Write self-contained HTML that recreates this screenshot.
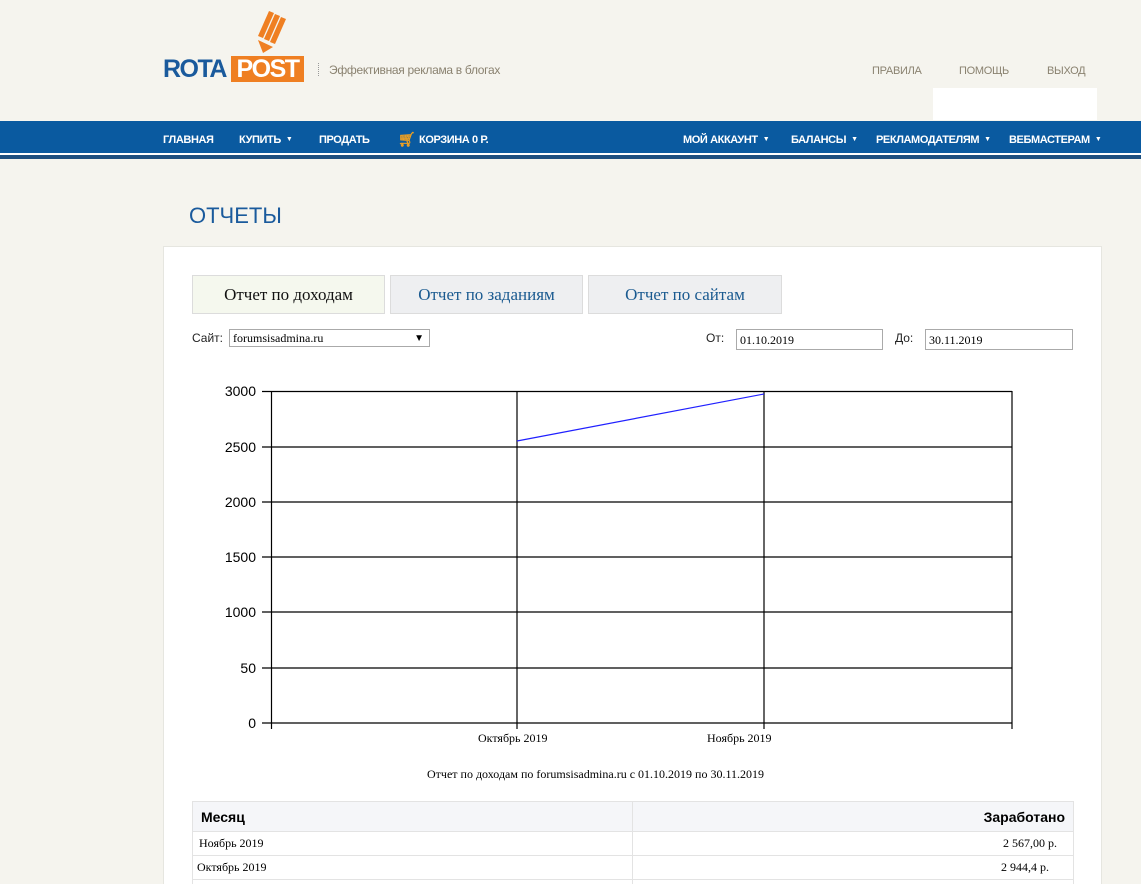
<!DOCTYPE html>
<html style="overflow:hidden"><head><meta charset="utf-8"><style>
*{margin:0;padding:0;box-sizing:border-box}
html,body{width:1141px;height:884px;overflow:hidden}
body{background:#f5f4ee;font-family:"Liberation Sans",sans-serif;position:relative}
.a{position:absolute;white-space:nowrap}
.nav{position:absolute;left:0;top:121px;width:1141px;height:32px;background:#0a5aa0}
.nv{position:absolute;top:134px;color:#fff;font-size:11px;font-weight:bold;letter-spacing:-0.4px}
.ar{font-size:7px;margin-left:5px;vertical-align:2px}
.top{position:absolute;top:65px;color:#8a8270;font-size:11px;letter-spacing:-0.3px}
.card{position:absolute;left:163px;top:246px;width:939px;height:650px;background:#fff;border:1px solid #e6e6e0}
.tab{position:absolute;top:275px;height:39px;border:1px solid #dcdcdc;font-family:"Liberation Serif",serif;font-size:17px;text-align:center;line-height:38px;color:#1a5a90;background:#eeeff1}
.lab{position:absolute;font-size:12px;color:#222}
.inp{position:absolute;height:21px;border:1px solid #aaa;background:#fff;font-family:"Liberation Serif",serif;font-size:12px;line-height:20px;padding-left:3px;color:#000}
.yl{position:absolute;left:200px;width:56px;text-align:right;font-size:14px;color:#000}
.xl{position:absolute;top:731px;font-family:"Liberation Serif",serif;font-size:12px}
td{border:1px solid #e3e3e3;font-family:"Liberation Serif",serif;font-size:12px;height:24px;padding:0 6px}
</style></head><body>
<svg class="a" style="left:254px;top:8px" width="36" height="46" viewBox="0 0 36 46">
<g fill="#ef7f22"><polygon points="4,28 15,3 20,5 9,30"/><polygon points="10,31 21,6 26,8 15,33"/><polygon points="16,34 27,9 32,11 21,36"/><polygon points="4,32 19,39 9,45"/></g></svg>
<div class="a" style="left:163px;top:56px;font-size:25px;font-weight:bold;color:#1a5a9c;letter-spacing:-1.5px;line-height:26px">ROTA</div>
<div class="a" style="left:231px;top:56px;width:73px;height:26px;background:#ef7f22;color:#fff;font-size:25px;font-weight:bold;line-height:26px;text-align:center;letter-spacing:-1.5px">POST</div>
<div class="a" style="left:318px;top:63px;height:13px;border-left:1px dotted #999"></div>
<div class="a" style="left:329px;top:63px;font-size:12px;color:#8a8270;letter-spacing:-0.3px">Эффективная реклама в блогах</div>
<div class="top" style="left:872px">ПРАВИЛА</div>
<div class="top" style="left:959px">ПОМОЩЬ</div>
<div class="top" style="left:1047px">ВЫХОД</div>
<div class="a" style="left:933px;top:88px;width:164px;height:32px;background:#fff"></div>
<div class="nav"></div>
<div class="a" style="left:0;top:153px;width:1141px;height:2px;background:#fff"></div>
<div class="a" style="left:0;top:155px;width:1141px;height:4px;background:#1d4f80"></div>
<div class="nv" style="left:163px">ГЛАВНАЯ</div>
<div class="nv" style="left:239px">КУПИТЬ<span class="ar">▼</span></div>
<div class="nv" style="left:319px">ПРОДАТЬ</div>
<div class="nv" style="left:398px;color:#f0a020;font-size:14px;top:131px">🛒︎</div>
<div class="nv" style="left:419px">КОРЗИНА 0 Р.</div>
<div class="nv" style="left:683px">МОЙ АККАУНТ<span class="ar">▼</span></div>
<div class="nv" style="left:791px">БАЛАНСЫ<span class="ar">▼</span></div>
<div class="nv" style="left:876px">РЕКЛАМОДАТЕЛЯМ<span class="ar">▼</span></div>
<div class="nv" style="left:1009px">ВЕБМАСТЕРАМ<span class="ar">▼</span></div>
<div class="a" style="left:189px;top:203px;font-size:22px;color:#1a5a9c">ОТЧЕТЫ</div>
<div class="card"></div>
<div class="tab" style="left:192px;width:193px;background:#f5f8ee;color:#111">Отчет по доходам</div>
<div class="tab" style="left:390px;width:193px">Отчет по заданиям</div>
<div class="tab" style="left:588px;width:194px">Отчет по сайтам</div>
<div class="lab" style="left:192px;top:331px">Сайт:</div>
<div class="inp" style="left:229px;top:329px;width:201px;height:18px;line-height:17px">forumsisadmina.ru<span style="position:absolute;right:5px;font-size:10px">▼</span></div>
<div class="lab" style="left:706px;top:331px">От:</div>
<div class="inp" style="left:736px;top:329px;width:147px">01.10.2019</div>
<div class="lab" style="left:895px;top:331px">До:</div>
<div class="inp" style="left:925px;top:329px;width:148px">30.11.2019</div>
<svg class="a" style="left:0;top:0" width="1141" height="884">
<g stroke="#000" stroke-width="1.2" fill="none">
<line x1="262" y1="391.5" x2="1012" y2="391.5"/><line x1="262" y1="447" x2="1012" y2="447"/><line x1="262" y1="502" x2="1012" y2="502"/><line x1="262" y1="557" x2="1012" y2="557"/><line x1="262" y1="612" x2="1012" y2="612"/><line x1="262" y1="668" x2="1012" y2="668"/><line x1="262" y1="723" x2="1012" y2="723"/>
<line x1="271.5" y1="391" x2="271.5" y2="729"/><line x1="517" y1="391" x2="517" y2="729"/><line x1="764" y1="391" x2="764" y2="729"/><line x1="1012" y1="391" x2="1012" y2="729"/>
</g>
<line x1="517" y1="441" x2="764" y2="394" stroke="#2020ff" stroke-width="1.2"/>
</svg>
<div class="yl" style="top:383px">3000</div>
<div class="yl" style="top:439px">2500</div>
<div class="yl" style="top:494px">2000</div>
<div class="yl" style="top:549px">1500</div>
<div class="yl" style="top:604px">1000</div>
<div class="yl" style="top:660px">50</div>
<div class="yl" style="top:715px">0</div>
<div class="xl" style="left:478px">Октябрь 2019</div>
<div class="xl" style="left:707px">Ноябрь 2019</div>
<div class="a" style="left:427px;top:767px;font-family:'Liberation Serif',serif;font-size:12px">Отчет по доходам по forumsisadmina.ru с 01.10.2019 по 30.11.2019</div>
<table class="a" style="left:192px;top:801px;width:882px;border-collapse:collapse">
<tr style="background:#f5f6f9"><td style="width:440px;height:30px;font-family:'Liberation Sans',sans-serif;font-weight:bold;font-size:14px;padding-left:8px">Месяц</td><td style="text-align:right;font-family:'Liberation Sans',sans-serif;font-weight:bold;font-size:14px;padding-right:8px">Заработано</td></tr>
<tr><td>Ноябрь 2019</td><td style="text-align:right;padding-right:16px">2 567,00 р.</td></tr>
<tr><td style="padding-left:4px">Октябрь 2019</td><td style="text-align:right;padding-right:24px">2 944,4 р.</td></tr>
<tr><td></td><td></td></tr>
</table>
</body></html>
